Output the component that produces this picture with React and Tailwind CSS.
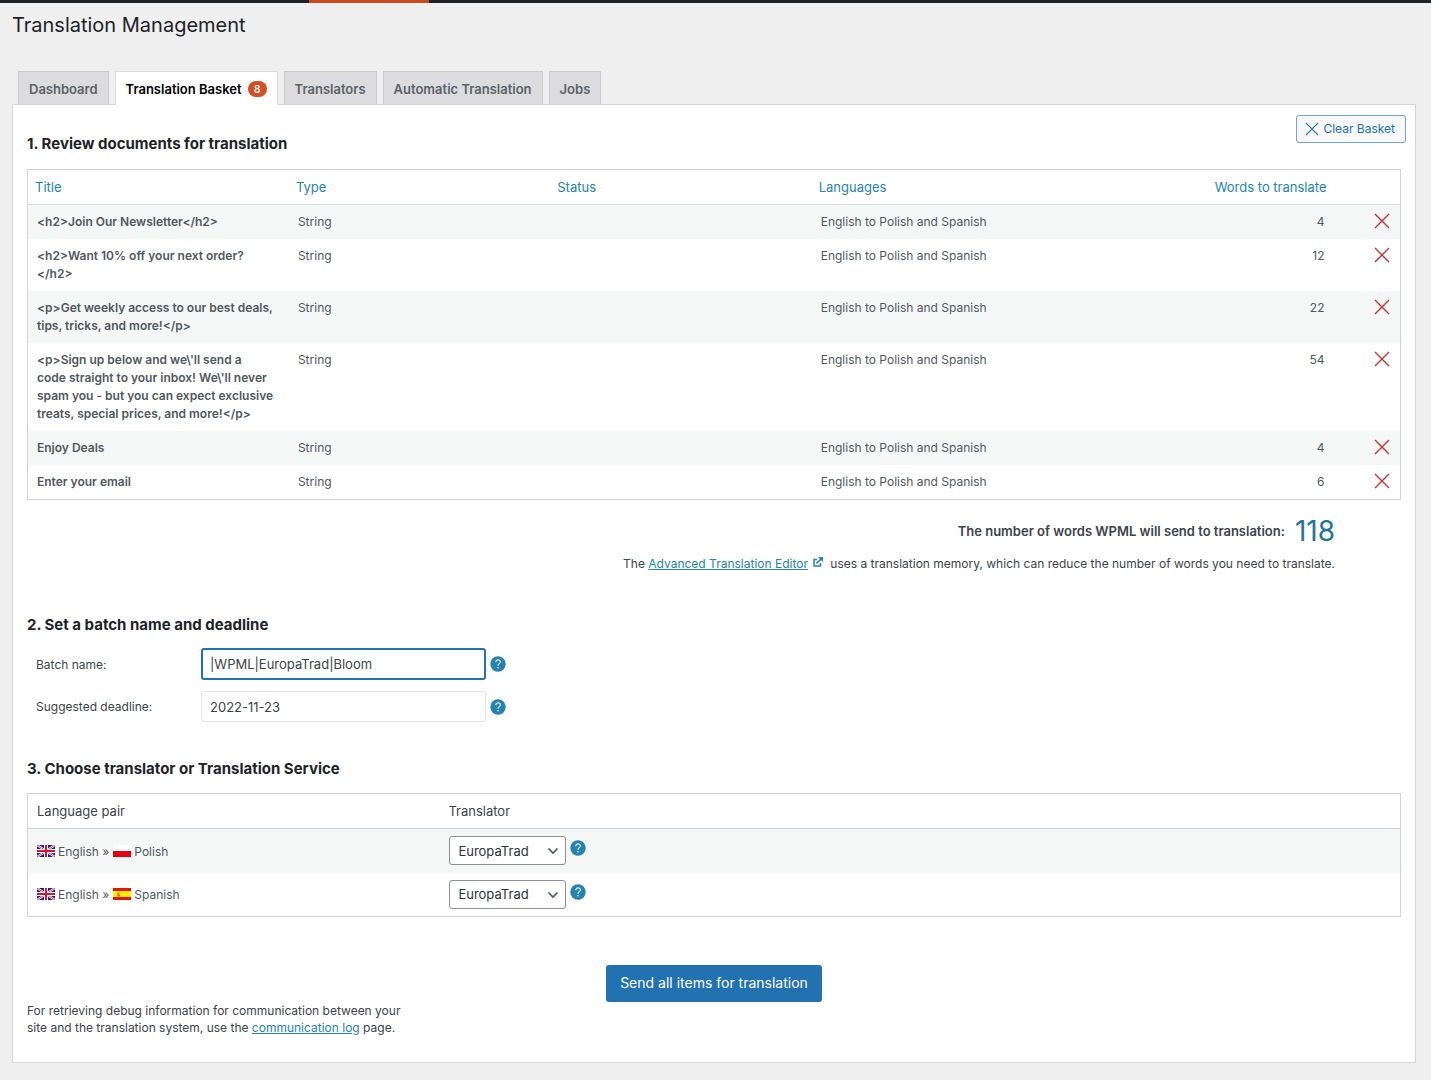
import React from "react";

const tabs = ["Dashboard", "Translation Basket", "Translators", "Automatic Translation", "Jobs"];

const documents = [
  { title: "<h2>Join Our Newsletter</h2>", words: 4 },
  { title: "<h2>Want 10% off your next order? </h2>", words: 12 },
  { title: "<p>Get weekly access to our best deals, tips, tricks, and more!</p>", words: 22 },
  {
    title:
      "<p>Sign up below and we\\'ll send a\ncode straight to your inbox! We\\'ll never spam you - but you can expect exclusive treats, special prices, and more!</p>",
    words: 54,
  },
  { title: "Enjoy Deals", words: 4 },
  { title: "Enter your email", words: 6 },
];

function Cross({ className }) {
  return (
    <svg viewBox="0 0 16 16" className={className} fill="none" stroke="currentColor" strokeWidth="1.4" aria-hidden="true">
      <path d="M1 1L15 15M15 1L1 15" />
    </svg>
  );
}

function Help({ label }) {
  return (
    <button type="button" aria-label={label} className="block h-4 w-4 shrink-0">
      <svg viewBox="0 0 16 16" className="h-4 w-4" aria-hidden="true">
        <circle cx="8" cy="8" r="7.7" fill="#2382ae" />
        <path
          d="M5.8 6.2C5.8 4.7 6.7 3.9 8 3.9s2.300.8 2.300 2c0 .9-.5 1.300-1.200 1.800C8.300 8.300 8 8.700 8 9.700"
          fill="none"
          stroke="#d9edf6"
          strokeWidth="1.2"
        />
        <circle cx="8" cy="11.700" r="0.800" fill="#d9edf6" />
      </svg>
    </button>
  );
}

function FlagUK() {
  return (
    <svg viewBox="0 0 18 12" className="h-3 w-[18px]" aria-hidden="true">
      <rect width="18" height="12" fill="#1c2478" />
      <path d="M0 0L18 12M18 0L0 12" stroke="#fff" strokeWidth="2.2" />
      <path d="M0 0L18 12M18 0L0 12" stroke="#e0304a" strokeWidth="0.9" />
      <path d="M9 0V12M0 6H18" stroke="#fff" strokeWidth="4" />
      <path d="M9 0V12M0 6H18" stroke="#dc1430" strokeWidth="2" />
    </svg>
  );
}

function FlagPoland() {
  return (
    <svg viewBox="0 0 18 12" className="h-3 w-[18px]" aria-hidden="true">
      <rect width="18" height="12" fill="#fff" />
      <rect y="6" width="18" height="6" fill="#e3000f" />
    </svg>
  );
}

function FlagSpain() {
  return (
    <svg viewBox="0 0 18 12" className="h-3 w-[18px]" aria-hidden="true">
      <rect width="18" height="12" fill="#e8120c" />
      <rect y="3" width="18" height="6" fill="#ffee00" />
      <path d="M4.500 4.500h2v1.200h-1v.8h1.500v2h-2.500z" fill="#c8651b" />
    </svg>
  );
}

const pairs = [
  { to: "Polish", Flag: FlagPoland },
  { to: "Spanish", Flag: FlagSpain },
];

export default function App() {
  return (
    <div className="min-h-screen bg-[#efefef] pb-4 font-['Inter',sans-serif] text-[12px] leading-[18px] text-[#3c434a]">
      <div className="h-[3px] bg-[#1d2327]">
        <div className="ml-[309px] h-full w-[120px] bg-[#ca4a1f]" />
      </div>
      <div className="pr-[15px] pl-3">
        <h1 className="pt-2 text-[20px] leading-7 text-[#1d2327]">Translation Management</h1>

        <nav className="mt-8 ml-[6px] flex gap-[6px]">
          {tabs.map((tab, i) => (
            <a
              key={tab}
              href="#"
              className={
                i === 1
                  ? "relative z-10 -mb-px flex h-[34px] items-center gap-[6px] border border-b-0 border-[#dcdcde] bg-white px-[10px] text-[13px] font-semibold text-black"
                  : "flex h-[33px] items-center border border-b-0 border-[#c9cacc] bg-[#dcdcde] px-[10px] pt-px text-[13px] font-semibold text-[#5c6267]"
              }
            >
              {tab}
              {i === 1 && (
                <span className="flex h-4 w-[19px] items-center justify-center rounded-full bg-[#d54e21] text-[10px] leading-4 text-white">8</span>
              )}
            </a>
          ))}
        </nav>

        <main className="border border-[#d4d5d7] bg-white px-[14px] pt-[10px] pb-[26px]">
          <div className="-mr-[5px] flex h-[54px] items-start justify-between">
            <h2 className="pt-[17px] text-[15px] leading-6 font-bold text-[#1d2327]">1. Review documents for translation</h2>
            <button
              type="button"
              className="flex h-7 items-center gap-1 rounded-[3px] border border-[#6fa5d4] bg-[#f6f7f7] pr-[10px] pl-2 text-[12px] text-[#2271b1]"
            >
              <Cross className="h-[14px] w-[14px]" />
              Clear Basket
            </button>
          </div>

          <table className="w-full table-fixed border border-[#d0d2d4] text-left">
            <colgroup>
              <col />
              <col />
              <col />
              <col />
              <col />
              <col className="w-[66px]" />
            </colgroup>
            <thead className="text-[13px]">
              <tr className="h-[35px] border-b border-[#d9dbdc] text-[#2583b0]">
                <th className="pr-2 pl-[7px] font-normal">Title</th>
                <th className="pr-2 pl-[7px] font-normal">Type</th>
                <th className="pr-2 pl-[7px] font-normal">Status</th>
                <th className="pr-2 pl-[7px] font-normal">Languages</th>
                <th className="pr-2 pl-[7px] text-right font-normal">Words to translate</th>
                <td />
              </tr>
            </thead>
            <tbody className="text-[#50575e]">
              {documents.map((doc) => (
                <tr key={doc.title} className="align-top odd:bg-[#f5f7f7]">
                  <th className="px-[9px] py-2 font-semibold whitespace-pre-line">{doc.title}</th>
                  <td className="px-[9px] py-2">String</td>
                  <td />
                  <td className="px-[9px] py-2">English to Polish and Spanish</td>
                  <td className="px-[10px] py-2 text-right">{doc.words}</td>
                  <td className="pt-2 pr-[10px]">
                    <button type="button" aria-label="Remove" className="ml-auto block text-[#c9302c]">
                      <Cross className="h-4 w-4" />
                    </button>
                  </td>
                </tr>
              ))}
            </tbody>
          </table>

          <div className="mt-[15px] mr-[66px] text-right">
            <p className="flex items-center justify-end gap-[10px] text-[13px] font-semibold">
              The number of words WPML will send to translation:
              <span className="text-[28px] leading-8 font-normal text-[#21759b]">118</span>
            </p>
            <p className="mt-2">
              The{" "}
              <a href="#" className="text-[#2583b0] underline">
                Advanced Translation Editor
              </a>
              <svg viewBox="0 0 10 10" className="mr-1 mb-[6px] ml-[5px] inline h-[10px] w-[10px]" fill="none" stroke="#2583b0" aria-hidden="true">
                <path d="M4 2.500H1V9H7.500V6" strokeWidth="1.500" />
                <path d="M3.500 6.500L8 2" strokeWidth="1.700" />
                <path d="M5 0H10V5Z" fill="#2583b0" stroke="none" />
              </svg>{" "}
              uses a translation memory, which can reduce the number of words you need to translate.
            </p>
          </div>

          <h2 className="mt-10 text-[15px] leading-6 font-bold text-[#1d2327]">2. Set a batch name and deadline</h2>
          <div className="mt-[11px] ml-[9px] flex items-center">
            <label htmlFor="batch" className="w-[165px] pt-px">Batch name:</label>
            <input
              id="batch"
              defaultValue="|WPML|EuropaTrad|Bloom"
              className="mr-1 h-8 w-[285px] rounded-[3px] border-2 border-[#2271b1] bg-white px-[7px] text-[13px] text-[#3c434a] outline-none"
            />
            <Help label="About the batch name" />
          </div>
          <div className="mt-[11px] ml-[9px] flex items-center">
            <label htmlFor="deadline" className="w-[165px] pt-px">Suggested deadline:</label>
            <input
              id="deadline"
              defaultValue="2022-11-23"
              className="mr-1 h-[31px] w-[285px] rounded-[3px] border border-[#e4e5e6] bg-white px-2 text-[13px] text-[#3c434a] outline-none"
            />
            <Help label="About the deadline" />
          </div>

          <h2 className="mt-[35px] text-[15px] leading-6 font-bold text-[#1d2327]">3. Choose translator or Translation Service</h2>
          <table className="mt-3 w-full table-fixed border border-[#d0d2d4] text-left">
            <thead className="text-[13px]">
              <tr className="h-[35px] border-b border-[#d0d2d4]">
                <th className="w-[30%] px-[9px] font-normal">Language pair</th>
                <th className="px-[9px] font-normal">Translator</th>
              </tr>
            </thead>
            <tbody>
              {pairs.map(({ to, Flag }) => (
                <tr key={to} className="h-11 odd:bg-[#f5f7f7]">
                  <td className="px-[9px]">
                    <div className="flex items-start gap-[3px] pt-[2px] text-[#50575e]">
                      <span className="pt-[2px]">
                        <FlagUK />
                      </span>
                      <span className="pr-px">English »</span>
                      <span className="pt-[2px]">
                        <Flag />
                      </span>
                      <span>{to}</span>
                    </div>
                  </td>
                  <td className="px-[10px]">
                    <div className="flex items-start gap-1">
                      <div className="relative">
                        <select
                          aria-label={"Translator for English to " + to}
                          className="block h-[29px] w-[117px] appearance-none rounded-[3px] border border-[#8c8f94] bg-white px-2 text-[13px] text-[#2c3338]"
                        >
                          <option>EuropaTrad</option>
                        </select>
                        <svg
                          viewBox="0 0 12 8"
                          className="pointer-events-none absolute top-[11px] right-[7px] h-2 w-3"
                          fill="none"
                          stroke="#50575e"
                          strokeWidth="1.700"
                          aria-hidden="true"
                        >
                          <path d="M1.500 1.500L6 6L10.500 1.500" />
                        </svg>
                      </div>
                      <div className="pt-1">
                        <Help label={"About the translator for " + to} />
                      </div>
                    </div>
                  </td>
                </tr>
              ))}
            </tbody>
          </table>

          <div className="mt-12 flex justify-center">
            <button type="button" className="h-[37px] rounded-[3px] bg-[#2271b1] px-[14px] pb-px text-[14px] text-white">
              Send all items for translation
            </button>
          </div>
          <p className="w-[390px] max-w-full leading-[17px]">
            For retrieving debug information for communication between your site and the translation system, use the{" "}
            <a href="#" className="text-[#2583b0] underline">
              communication log
            </a>{" "}
            page.
          </p>
        </main>
      </div>
    </div>
  );
}
